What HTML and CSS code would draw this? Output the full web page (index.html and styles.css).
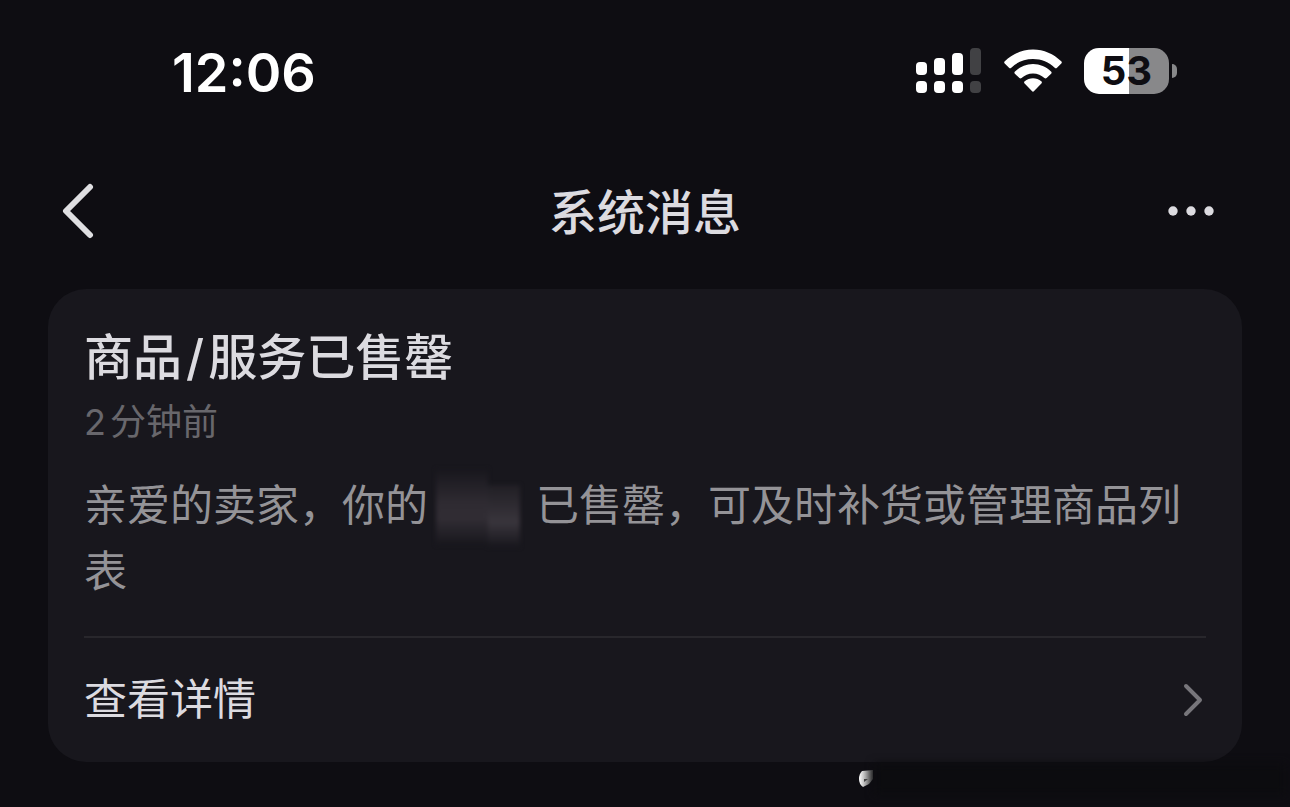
FILE: index.html
```html
<!DOCTYPE html>
<html lang="zh">
<head>
	<meta charset="UTF-8">
	<meta name="viewport" content="width=device-width, initial-scale=1.0">
	<title>系统消息</title>
	<link rel="stylesheet" href="styles.css">
</head>
<body>
	<div class="status">
		<time class="clock">12:06</time>
		<div class="status-icons">
			<svg class="signal" width="66" height="46" viewBox="0 0 66 46">
				<g fill="#fff">
					<rect x="0" y="14" width="11" height="13" rx="4"/>
					<rect x="18" y="10" width="11" height="17" rx="4"/>
					<rect x="36" y="5" width="11" height="22" rx="4"/>
					<rect x="0" y="33" width="11" height="12" rx="4"/>
					<rect x="18" y="33" width="11" height="12" rx="4"/>
					<rect x="36" y="33" width="11" height="12" rx="4"/>
				</g>
				<g fill="#414144">
					<rect x="54" y="0" width="11" height="27" rx="4"/>
					<rect x="54" y="33" width="11" height="12" rx="4"/>
				</g>
			</svg>
			<svg class="wifi" width="58" height="44" viewBox="0 0 58 44" fill="#fff">
				<path d="M.8 12.2C8.500 5 18 .5 29 .5s20.500 4.500 28.200 11.700c.8.800.8 1.600.1 2.300l-4.300 4.200c-.7.700-1.500.7-2.300 0C45 13 37.500 10 29 10S13 13 7.300 18.700c-.8.700-1.600.7-2.300 0L.7 14.500c-.7-.7-.7-1.500.1-2.300z"/>
				<path d="M11 22.500C16 17.800 22 15 29 15S42 17.800 47 22.500c.8.700.8 1.500.1 2.200l-4.500 4.400c-.7.700-1.400.6-2.200 0C37.400 26.200 33.500 24.500 29 24.500S20.600 26.200 17.600 29.100c-.8.600-1.500.7-2.200 0l-4.500-4.400c-.7-.7-.7-1.500.1-2.200z"/>
				<path d="M20.700 32.200C23 30.300 26 29.200 29 29.200s6 1.100 8.300 3c.8.600.8 1.500.1 2.200l-7.300 7.700c-.7.700-1.500.7-2.200 0L20.600 34.400c-.7-.7-.7-1.600.1-2.200z"/>
			</svg>
			<div class="battery">
				<span class="battery-body">53</span>
				<span class="battery-cap"></span>
			</div>
		</div>
	</div>

	<header class="nav">
		<button class="back" type="button" aria-label="返回">
			<svg width="32" height="56" viewBox="0 0 32 56"><path d="M28 4L4 28L28 52"/></svg>
		</button>
		<h1>系统消息</h1>
		<button class="more" type="button" aria-label="更多">
			<svg width="46" height="10" viewBox="0 0 46 10"><circle cx="5" cy="5" r="4.700"/><circle cx="23" cy="5" r="4.700"/><circle cx="41" cy="5" r="4.700"/></svg>
		</button>
	</header>

	<main class="card">
		<h2>商品<span class="slash">/</span>服务已售罄</h2>
		<p class="ago">2<span class="unit">分钟前</span></p>
		<p class="text">亲爱的卖家，你的<span class="mask"></span>已售罄，可及时补货或管理商品列表</p>
		<a class="detail" href="#">
			<span>查看详情</span>
			<svg width="20" height="34" viewBox="0 0 20 34"><path d="M3 3L17 17L3 31"/></svg>
		</a>
	</main>

	<div class="smudge">
		<svg width="16" height="20" viewBox="0 0 16 20">
			<defs>
				<linearGradient id="fade"><stop offset="0" stop-color="#fff"/><stop offset=".4" stop-color="#b8b8b8"/><stop offset="1" stop-color="#444"/></linearGradient>
			</defs>
			<path fill="url(#fade)" d="M4 2L15 1V10L11 15L5 18Q1 15 1 10Q1 5 4 2z"/>
			<path fill="#444" d="M6 10L10 10L6 13z"/>
		</svg>
	</div>
</body>
</html>
```
FILE: styles.css
```css
*{
	margin: 0;
	padding: 0;
	box-sizing: border-box;
}
body{
	position: relative;
	min-height: 100vh;
	overflow-x: hidden;
	background: #0e0d12;
	color: #dcdbe0;
	font-family: Inter, "Noto Sans CJK SC", sans-serif;
}
button{
	border: 0;
	background: none;
	cursor: pointer;
}
svg{
	display: block;
}

/* 状态栏 */
.status{
	display: flex;
	justify-content: space-between;
	align-items: center;
	height: 142px;
	padding: 0 113px 0 172px;
}
.clock{
	padding-top: 3px;
	font-size: 54px;
	font-weight: 600;
	line-height: 64px;
	color: #fff;
}
.status-icons{
	display: flex;
	align-items: center;
	gap: 22px;
}
.battery{
	display: flex;
	align-items: center;
	gap: 3px;
}
.battery-body{
	width: 85px;
	height: 46px;
	border-radius: 15px;
	background: linear-gradient(90deg, #fff 53%, #88888a 53%);
	color: #0e0d12;
	font-size: 40px;
	font-weight: 700;
	line-height: 46px;
	text-align: center;
}
.battery-cap{
	width: 5px;
	height: 14px;
	border-radius: 0 7px 7px 0;
	background: #88888a;
}

/* 导航栏 */
.nav{
	display: grid;
	grid-template-columns: 1fr auto 1fr;
	align-items: center;
	height: 138px;
	padding: 0 62px;
}
.nav h1{
	padding-top: 3px;
	font-size: 48px;
	font-weight: 500;
	line-height: 64px;
}
.back{
	justify-self: start;
}
.back path{
	fill: none;
	stroke: #dfdfe2;
	stroke-width: 6;
	stroke-linecap: round;
	stroke-linejoin: round;
}
.more{
	justify-self: end;
	padding-right: 14px;
}
.more circle{
	fill: #dcdbe0;
}

/* 消息卡片 */
.card{
	margin: 9px 48px 44px;
	padding: 37px 36px 0;
	border-radius: 38px;
	background: #18171d;
}
.card h2{
	font-size: 49px;
	font-weight: 500;
	line-height: 64px;
}
.slash{
	padding: 0 4px;
}
.ago{
	margin-top: 8px;
	font-size: 36px;
	font-weight: 400;
	line-height: 48px;
	color: #68676c;
}
.unit{
	margin-left: 4px;
}
.text{
	margin-top: 26px;
	padding-bottom: 32px;
	font-size: 43px;
	font-weight: 400;
	line-height: 66px;
	color: #949397;
}
/* 打码的商品名 */
.mask{
	display: inline-block;
	width: 84px;
	height: 80px;
	margin: -12px 16px -12px 8px;
	vertical-align: middle;
	background:
		linear-gradient(#18171d, #2f2b32 45%, #312d34 65%, #18171d) 0 0 / 52px 76px no-repeat,
		linear-gradient(#211f25, #39353c 60%, #18171d) 52px 16px / 32px 62px no-repeat;
	filter: blur(2px);
}
.detail{
	display: flex;
	justify-content: space-between;
	align-items: center;
	height: 126px;
	padding: 0 3px 0 0;
	border-top: 2px solid #28272c;
	color: #dcdbe0;
	font-size: 43px;
	line-height: 64px;
	text-decoration: none;
}
.detail span{
	padding-bottom: 2px;
}
.detail path{
	fill: none;
	stroke: #77767b;
	stroke-width: 4;
	stroke-linecap: round;
	stroke-linejoin: round;
}

/* 右下角的涂抹痕迹，盖在卡片边缘上 */
.smudge{
	position: absolute;
	right: 0;
	bottom: 12px;
	display: flex;
	align-items: center;
	width: 432px;
	height: 32px;
}
.smudge::before{
	content: "";
	position: absolute;
	left: 16px;
	right: 4px;
	top: 0;
	bottom: 0;
	background: #0c0c0f;
	filter: blur(4px);
}
```
